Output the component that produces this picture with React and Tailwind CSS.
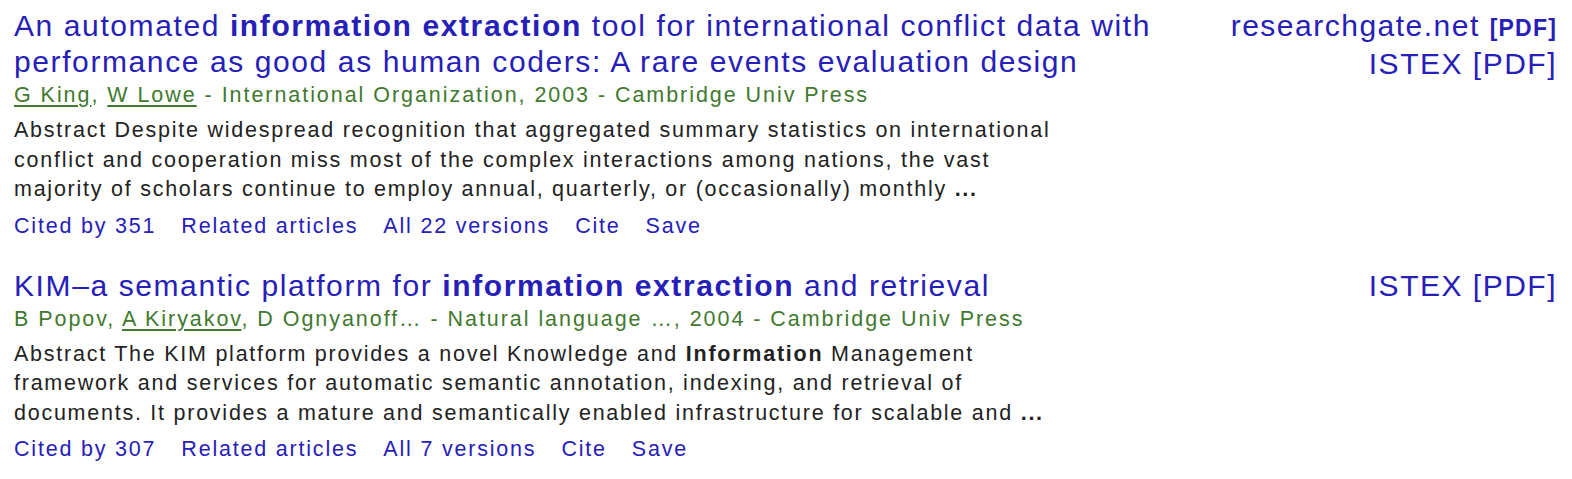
const results = [
  {
    title: [
      { t: "An automated " },
      { t: "information extraction", b: true },
      { t: " tool for international conflict data with performance as good as human coders: A rare events evaluation design" },
    ],
    authors: [
      { t: "G King", u: true },
      { t: ", " },
      { t: "W Lowe", u: true },
      { t: " - International Organization, 2003 - Cambridge Univ Press" },
    ],
    abstract: [
      { t: "Abstract Despite widespread recognition that aggregated summary statistics on international conflict and cooperation miss most of the complex interactions among nations, the vast majority of scholars continue to employ annual, quarterly, or (occasionally) monthly " },
      { t: "...", b: true },
    ],
    cited: 351,
    versions: 22,
    side: [
      { src: "researchgate.net", small: true },
      { src: "ISTEX" },
    ],
  },
  {
    title: [
      { t: "KIM–a semantic platform for " },
      { t: "information extraction", b: true },
      { t: " and retrieval" },
    ],
    authors: [
      { t: "B Popov, " },
      { t: "A Kiryakov", u: true },
      { t: ", D Ognyanoff… - Natural language …, 2004 - Cambridge Univ Press" },
    ],
    abstract: [
      { t: "Abstract The KIM platform provides a novel Knowledge and " },
      { t: "Information", b: true },
      { t: " Management framework and services for automatic semantic annotation, indexing, and retrieval of documents. It provides a mature and semantically enabled infrastructure for scalable and " },
      { t: "...", b: true },
    ],
    cited: 307,
    versions: 7,
    side: [{ src: "ISTEX" }],
  },
];

function Result({ r }) {
  return (
    <div className="flex">
      <div className="w-[1190px] shrink-0">
        <h3 className="text-[30px] leading-[36px] tracking-[1.6px] text-[#2620b8]">
          {r.title.map((p, i) => (
            <span key={i} className={p.b ? "font-bold" : ""}>{p.t}</span>
          ))}
        </h3>
        <div className="text-[21.5px] leading-[30px] tracking-[1.95px] text-[#42782f]">
          {r.authors.map((p, i) => (
            <span key={i} className={p.u ? "underline underline-offset-[3px]" : ""}>{p.t}</span>
          ))}
        </div>
        <div className="w-[1070px] mt-[6px] text-[21.5px] leading-[29.5px] tracking-[1.75px] text-[#222]">
          {r.abstract.map((p, i) => (
            <span key={i} className={p.b ? "font-bold" : ""}>{p.t}</span>
          ))}
        </div>
        <div className="flex gap-[25px] mt-[3px] text-[21.5px] leading-[36px] tracking-[1.8px] text-[#2620b8]">
          <span>Cited by {r.cited}</span>
          <span>Related articles</span>
          <span>All {r.versions} versions</span>
          <span>Cite</span>
          <span>Save</span>
        </div>
      </div>
      <div className="flex-1 flex flex-col items-end pr-[15px] text-[#2620b8]">
        {r.side.map((s, i) => (
          <div key={i} className="text-[30px] leading-[36px] tracking-[1.5px]">
            {s.src}{" "}
            {s.small ? (
              <span className="text-[23px] font-bold tracking-[1.2px]">[PDF]</span>
            ) : (
              <span>[PDF]</span>
            )}
          </div>
        ))}
      </div>
    </div>
  );
}

export default function App() {
  return (
    <div className="bg-white w-[1572px] h-[479px] pl-[14px] pt-[8px] font-['Liberation_Sans',Arial,sans-serif]">
      <div className="flex flex-col gap-[24px]">
        {results.map((r, i) => (
          <Result key={i} r={r} />
        ))}
      </div>
    </div>
  );
}
